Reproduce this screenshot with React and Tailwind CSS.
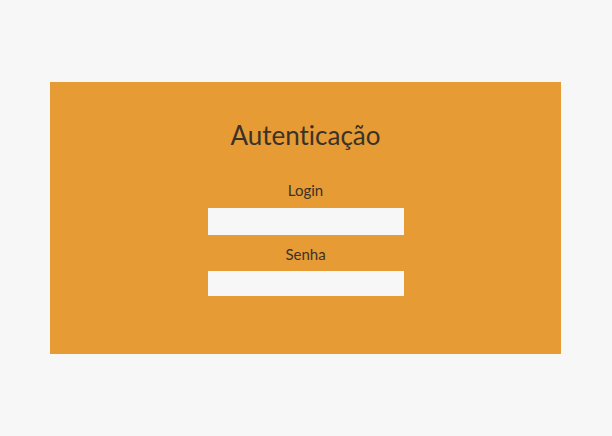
export default function App() {

    return (

        <div className="min-h-[436px] bg-[#f7f7f7] pt-[82px] font-['Lato','Liberation_Sans',sans-serif] text-[#3b3227]">

            <div className="ml-[50px] flex h-[272px] w-[511px] flex-col items-center bg-[#e69b35]">

                <h1 className="mt-[36px] text-[26px] leading-[34px] [font-variant-ligatures:none]">

                    Autenticação

                </h1>

                <label className="mt-[28px] text-[15px] leading-[20px]">

                    Login

                </label>

                <input
                    type="text"
                    className="mt-[8px] h-[27px] w-[196px] bg-[#f7f7f7] outline-none"
                />

                <label className="mt-[9px] text-[15px] leading-[20px]">

                    Senha

                </label>

                <input
                    type="password"
                    className="mt-[7px] h-[25px] w-[196px] bg-[#f7f7f7] outline-none"
                />

            </div>

        </div>

    );

}
